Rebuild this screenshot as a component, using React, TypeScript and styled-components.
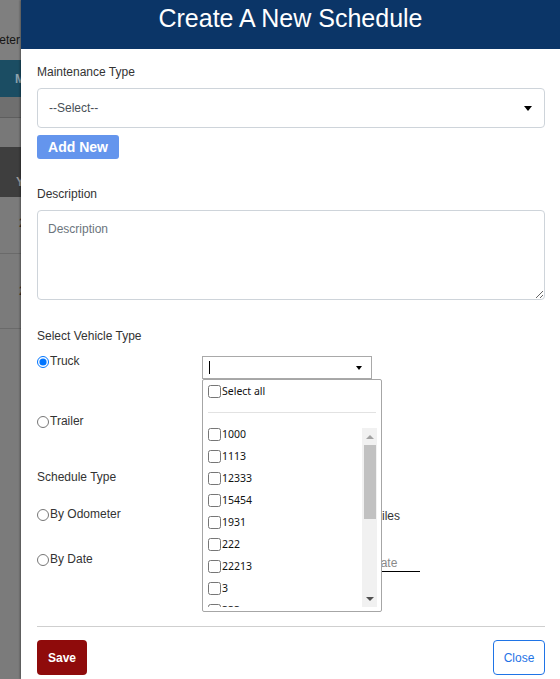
import React from 'react';
import styled, { createGlobalStyle } from 'styled-components';

const VEHICLES: Array<string> = ['1000', '1113', '12333', '15454', '1931', '222', '22213', '3', '333'];

const GlobalStyle = createGlobalStyle`
  html, body, #root { height: 100%; }
  body {
    margin: 0;
    overflow: hidden;
    background: #7b7b7b;
    font-family: "Liberation Sans", Arial, sans-serif;
  }
  * { box-sizing: border-box; }
`;

function App() {
  return (
    <Page>
      <GlobalStyle />
      <Backdrop>
        <Band $h={60} $bg="#7f7f7f" $justify="flex-end" $pad="33px 1px 0 0" $align="flex-start">
          <BandText $color="#151515">Odometer</BandText>
        </Band>
        <Band $h={37} $bg="#1b4d63" $pad="0 0 0 15px">
          <BandText $color="#8ea2ad" $bold>M</BandText>
        </Band>
        <Band $h={21} $bg="#6f6f6f" $line="#5e5e5e" />
        <Band $h={29} $bg="#787878" />
        <Band $h={50} $bg="#3e3e3e" $pad="28px 0 0 16px" $align="flex-start">
          <BandText $color="#9a9a9a" $bold>Y</BandText>
        </Band>
        <Band $h={57} $bg="#7b7b7b" $line="#6a6a6a" $pad="0 0 4px 19px">
          <BandText $color="#3b2a18">2</BandText>
        </Band>
        <Band $h={75} $bg="#7b7b7b" $line="#6a6a6a" $pad="0 0 0 19px">
          <BandText $color="#3b2a18">2</BandText>
        </Band>
      </Backdrop>

      <Modal>
        <Header>Create A New Schedule</Header>
        <Body>
          <FieldLabel>Maintenance Type</FieldLabel>
          <SelectBox>
            <span>--Select--</span>
            <Caret $w={4} $h={5} />
          </SelectBox>
          <AddButton>Add New</AddButton>

          <FieldLabel $mt={28}>Description</FieldLabel>
          <DescriptionArea placeholder="Description" />

          <FieldLabel $mt={29} $mb={0}>Select Vehicle Type</FieldLabel>
          <RadioRow $h={60} $mt={11}>
            <RadioLabel>
              <input type="radio" name="vehicle" defaultChecked />
              Truck
            </RadioLabel>
            <VehiclePicker>
              <TextCursor />
              <Caret $w={3.5} $h={4} />
              <Popup>
                <SelectAllRow>
                  <input type="checkbox" />
                  Select all
                </SelectAllRow>
                <Divider />
                <ListArea>
                  <OptionList>
                    {VEHICLES.map(v => (
                      <OptionRow key={v}>
                        <input type="checkbox" />
                        {v}
                      </OptionRow>
                    ))}
                  </OptionList>
                  <ScrollTrack>
                    <ScrollArrow $dir="up" $color="#a3a3a3" />
                    <ScrollThumb />
                    <ScrollSpace />
                    <ScrollArrow $dir="down" $color="#505050" />
                  </ScrollTrack>
                </ListArea>
              </Popup>
            </VehiclePicker>
          </RadioRow>
          <RadioRow $h={56}>
            <RadioLabel>
              <input type="radio" name="vehicle" />
              Trailer
            </RadioLabel>
          </RadioRow>

          <FieldLabel $mb={23}>Schedule Type</FieldLabel>
          <RadioRow $h={45}>
            <RadioLabel>
              <input type="radio" name="schedule" />
              By Odometer
            </RadioLabel>
            <LineInput />
            <UnitText>Miles</UnitText>
          </RadioRow>
          <RadioRow $h={74}>
            <RadioLabel>
              <input type="radio" name="schedule" />
              By Date
            </RadioLabel>
            <span />
            <DateInput placeholder="Date" />
          </RadioRow>

          <Footer>
            <SaveButton>Save</SaveButton>
            <CloseButton>Close</CloseButton>
          </Footer>
        </Body>
      </Modal>
    </Page>
  );
}

const Page = styled.div`
  display: flex;
  height: 100vh;
`;

const Backdrop = styled.div`
  width: 21px;
  flex-shrink: 0;
  overflow: hidden;
  display: flex;
  flex-direction: column;
`;

const Band = styled.div<{ $h: number; $bg: string; $line?: string; $pad?: string; $justify?: string; $align?: string }>`
  height: ${p => p.$h}px;
  flex-shrink: 0;
  background: ${p => p.$bg};
  border-bottom: ${p => (p.$line ? `1px solid ${p.$line}` : 'none')};
  padding: ${p => p.$pad ?? '0'};
  display: flex;
  justify-content: ${p => p.$justify ?? 'flex-start'};
  align-items: ${p => p.$align ?? 'center'};
  overflow: hidden;
`;

const BandText = styled.span<{ $color: string; $bold?: boolean }>`
  flex-shrink: 0;
  white-space: nowrap;
  font-size: 12px;
  line-height: 14px;
  font-weight: ${p => (p.$bold ? 'bold' : 'normal')};
  color: ${p => p.$color};
`;

const Modal = styled.div`
  flex: 1;
  min-width: 0;
  background: #fff;
  display: flex;
  flex-direction: column;
  box-shadow: -1px 0 2px rgba(0, 0, 0, 0.35);
`;

const Header = styled.div`
  height: 49px;
  flex-shrink: 0;
  background: #0b3567;
  color: #fff;
  display: flex;
  justify-content: center;
  align-items: flex-start;
  padding-top: 4px;
  font-size: 25px;
  line-height: 29px;
`;

const Body = styled.div`
  padding: 16px 15px 0 16px;
  display: flex;
  flex-direction: column;
`;

const FieldLabel = styled.div<{ $mt?: number; $mb?: number }>`
  margin-top: ${p => p.$mt ?? 0}px;
  margin-bottom: ${p => p.$mb ?? 9}px;
  font-size: 12px;
  line-height: 14px;
  color: #333;
`;

const SelectBox = styled.div`
  height: 40px;
  border: 1px solid #ced4da;
  border-radius: 4px;
  display: flex;
  align-items: center;
  justify-content: space-between;
  padding: 0 12px 0 11px;
  font-size: 12px;
  color: #495057;
`;

const Caret = styled.span<{ $w: number; $h: number }>`
  width: 0;
  height: 0;
  border-left: ${p => p.$w}px solid transparent;
  border-right: ${p => p.$w}px solid transparent;
  border-top: ${p => p.$h}px solid #000;
`;

const AddButton = styled.button`
  align-self: flex-start;
  margin-top: 7px;
  width: 82px;
  height: 24px;
  padding: 0;
  border: none;
  border-radius: 3px;
  background: #6495ed;
  color: #fff;
  font-family: "Liberation Sans", Arial, sans-serif;
  font-size: 14px;
  font-weight: bold;
`;

const DescriptionArea = styled.textarea`
  display: block;
  width: 100%;
  height: 90px;
  margin: 0;
  padding: 11px 10px;
  border: 1px solid #ced4da;
  border-radius: 4px;
  resize: vertical;
  font-family: "Liberation Sans", Arial, sans-serif;
  font-size: 12px;
  color: #495057;
  &::placeholder { color: #6c757d; }
`;

const RadioRow = styled.div<{ $h: number; $mt?: number }>`
  display: grid;
  grid-template-columns: 165px 170px 1fr;
  align-items: start;
  height: ${p => p.$h}px;
  margin-top: ${p => p.$mt ?? 0}px;
`;

const RadioLabel = styled.label`
  display: flex;
  align-items: center;
  font-size: 12px;
  line-height: 14px;
  color: #333;
  input {
    margin: 1px 1px 0 0;
    width: 12px;
    height: 12px;
  }
`;

const VehiclePicker = styled.div`
  position: relative;
  margin-top: 2px;
  height: 23px;
  border: 1px solid #a9a9a9;
  display: flex;
  align-items: center;
  justify-content: space-between;
  padding: 0 9px 0 6px;
`;

const TextCursor = styled.span`
  width: 1px;
  height: 13px;
  background: #000;
`;

const Popup = styled.div`
  position: absolute;
  top: 22px;
  left: -1px;
  width: 180px;
  height: 233px;
  z-index: 5;
  background: #fff;
  border: 1px solid #a6a6a6;
  border-radius: 2px;
  padding: 0 4px 4px 5px;
  display: flex;
  flex-direction: column;
  font-family: "Noto Sans", "Open Sans", sans-serif;
  font-size: 10.5px;
  color: #111;
`;

const SelectAllRow = styled.label`
  height: 32px;
  flex-shrink: 0;
  padding-top: 5px;
  display: flex;
  align-items: flex-start;
  line-height: 13px;
  input { margin: 0 1px 0 0; width: 13px; height: 13px; }
`;

const Divider = styled.div`
  height: 1px;
  flex-shrink: 0;
  margin-right: 1px;
  background: #e2e2e2;
`;

const ListArea = styled.div`
  flex: 1;
  min-height: 0;
  margin-top: 15px;
  display: flex;
`;

const OptionList = styled.div`
  flex: 1;
  overflow: hidden;
`;

const OptionRow = styled.label`
  height: 22px;
  display: flex;
  align-items: flex-start;
  line-height: 13px;
  input { margin: 0 1px 0 0; width: 13px; height: 13px; }
`;

const ScrollTrack = styled.div`
  width: 15px;
  background: #f1f1f1;
  display: flex;
  flex-direction: column;
`;

const ScrollArrow = styled.div<{ $dir: 'up' | 'down'; $color: string }>`
  height: 17px;
  flex-shrink: 0;
  display: flex;
  align-items: center;
  justify-content: center;
  &::after {
    content: '';
    border-left: 4px solid transparent;
    border-right: 4px solid transparent;
    ${p => (p.$dir === 'up' ? `border-bottom: 4px solid ${p.$color};` : `border-top: 4px solid ${p.$color};`)}
  }
`;

const ScrollThumb = styled.div`
  height: 74px;
  margin: 0 1px 0 2px;
  background: #c1c1c1;
`;

const ScrollSpace = styled.div`
  flex: 1;
`;

const LineInput = styled.div`
  margin-top: 2px;
  height: 18px;
  border-bottom: 1px solid #000;
`;

const UnitText = styled.span`
  padding-top: 2px;
  font-size: 12px;
  line-height: 14px;
  color: #333;
`;

const DateInput = styled.input`
  width: 48px;
  height: 18px;
  margin: 2px 0 0;
  padding: 0;
  border: none;
  border-bottom: 1px solid #000;
  outline: none;
  font-family: "Liberation Sans", Arial, sans-serif;
  font-size: 12px;
  &::placeholder { color: #8a8a8a; }
`;

const Footer = styled.div`
  display: flex;
  justify-content: space-between;
  padding-top: 13px;
  border-top: 1px solid #cfcfcf;
`;

const SaveButton = styled.button`
  width: 50px;
  height: 35px;
  padding: 0;
  border: none;
  border-radius: 4px;
  background: #8f0b0b;
  color: #fff;
  font-family: "Liberation Sans", Arial, sans-serif;
  font-size: 12px;
  font-weight: bold;
`;

const CloseButton = styled.button`
  width: 52px;
  height: 35px;
  padding: 0;
  border: 1px solid #1f74e6;
  border-radius: 4px;
  background: #fff;
  color: #1f74e6;
  font-family: "Liberation Sans", Arial, sans-serif;
  font-size: 12px;
`;

export default App;
